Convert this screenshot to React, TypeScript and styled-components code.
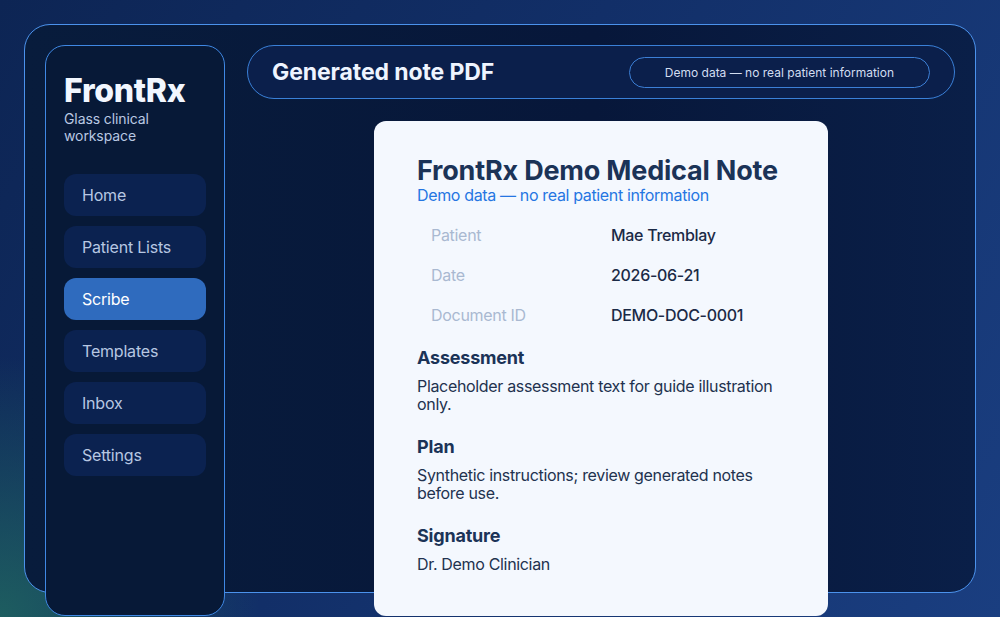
import React from "react";
import styled, { createGlobalStyle } from "styled-components";

const GlobalStyle = createGlobalStyle`
  html, body {
    margin: 0;
    padding: 0;
    height: 100%;
    overflow: hidden;
  }
  body {
    font-family: Inter, "Noto Sans", "Liberation Sans", sans-serif;
    background:
      radial-gradient(circle at 0% 100%, rgba(34, 110, 96, 0.75) 0, rgba(34, 110, 96, 0) 260px),
      linear-gradient(120deg, #0d2554 0%, #122f68 45%, #1a3e80 100%);
    min-height: 617px;
  }
`;

const Page = styled.div`
  padding: 24px;
  height: 617px;
  box-sizing: border-box;
`;

const Frame = styled.div`
  height: 569px;
  box-sizing: border-box;
  border: 1px solid #4b92ec;
  border-radius: 26px;
  background: linear-gradient(90deg, #081c3c 0%, #07173a 60%, #0a1f48 100%);
  padding: 20px;
  display: grid;
  grid-template-columns: 180px 1fr;
  gap: 22px;
  align-items: stretch;
`;

const Sidebar = styled.aside`
  box-sizing: border-box;
  height: 571px;
  border: 1px solid #3f88e4;
  border-radius: 20px;
  background: #071937;
  padding: 26px 18px 18px;
  display: flex;
  flex-direction: column;
`;

const Logo = styled.div`
  font-size: 32px;
  font-weight: 800;
  color: #f2f7ff;
  line-height: 38px;
  letter-spacing: -0.3px;
`;

const Tagline = styled.div`
  font-size: 14px;
  line-height: 17px;
  color: #b9c8e2;
  width: 110px;
  letter-spacing: -0.1px;
`;

const Nav = styled.nav`
  margin-top: 30px;
  display: flex;
  flex-direction: column;
  gap: 10px;
`;

const NavItem = styled.div<{ active?: boolean }>`
  height: 42px;
  border-radius: 12px;
  padding-left: 18px;
  display: flex;
  align-items: center;
  font-size: 16px;
  letter-spacing: -0.2px;
  color: ${({ active }) => (active ? "#ffffff" : "#b7c7e2")};
  background: ${({ active }) => (active ? "#2f6bbe" : "#0b2250")};
`;

const Main = styled.main`
  display: flex;
  flex-direction: column;
  gap: 22px;
  min-width: 0;
`;

const Header = styled.header`
  height: 54px;
  box-sizing: border-box;
  border: 1px solid #3a80d8;
  border-radius: 27px;
  background: #0b1f4b;
  padding: 0 24px;
  display: flex;
  align-items: center;
  justify-content: space-between;
`;

const HeaderTitle = styled.h1`
  margin: 0;
  font-size: 23px;
  font-weight: 700;
  color: #eef4ff;
  letter-spacing: -0.1px;
`;

const Badge = styled.div`
  height: 31px;
  box-sizing: border-box;
  border: 1px solid #3c7fd6;
  border-radius: 16px;
  padding: 0 35px;
  display: flex;
  align-items: center;
  font-size: 12px;
  color: #d2ddf1;
`;

const Card = styled.article`
  align-self: center;
  width: 454px;
  box-sizing: border-box;
  background: #f4f8fe;
  border-radius: 12px;
  padding: 34px 43px 43px;
  color: #1b2c4a;
`;

const CardTitle = styled.h2`
  margin: 0;
  font-size: 27px;
  line-height: 32px;
  font-weight: 700;
  color: #1b3357;
  letter-spacing: -0.2px;
`;

const Subtitle = styled.div`
  margin-top: -2px;
  font-size: 16px;
  line-height: 20px;
  color: #2576e2;
  letter-spacing: -0.35px;
`;

const MetaTable = styled.table`
  border-collapse: collapse;
  margin-top: 10px;
  font-size: 16px;
  letter-spacing: -0.3px;
`;

const MetaLabel = styled.td`
  width: 152px;
  padding: 10px 14px;
  color: #a9b9d1;
  line-height: 20px;
`;

const MetaValue = styled.td`
  padding: 10px 14px;
  color: #1b2a46;
  font-weight: 500;
  line-height: 20px;
`;

const Section = styled.section`
  margin-top: 12px;
  & + & {
    margin-top: 23px;
  }
`;

const SectionTitle = styled.h3`
  margin: 0;
  font-size: 18px;
  line-height: 22px;
  font-weight: 700;
  color: #1b3357;
  letter-spacing: -0.2px;
`;

const SectionText = styled.p`
  margin: 8px 0 0;
  font-size: 16px;
  line-height: 18px;
  color: #22324f;
  letter-spacing: -0.33px;
`;

const navItems = ["Home", "Patient Lists", "Scribe", "Templates", "Inbox", "Settings"];

const meta = [
  ["Patient", "Mae Tremblay"],
  ["Date", "2026-06-21"],
  ["Document ID", "DEMO-DOC-0001"],
];

const sections = [
  ["Assessment", "Placeholder assessment text for guide illustration only."],
  ["Plan", "Synthetic instructions; review generated notes before use."],
  ["Signature", "Dr. Demo Clinician"],
];

export default function App() {
  return (
    <>
      <GlobalStyle />
      <Page>
        <Frame>
          <Sidebar>
            <Logo>FrontRx</Logo>
            <Tagline>Glass clinical workspace</Tagline>
            <Nav>
              {navItems.map((item) => (
                <NavItem key={item} active={item === "Scribe"}>
                  {item}
                </NavItem>
              ))}
            </Nav>
          </Sidebar>
          <Main>
            <Header>
              <HeaderTitle>Generated note PDF</HeaderTitle>
              <Badge>Demo data — no real patient information</Badge>
            </Header>
            <Card>
              <CardTitle>FrontRx Demo Medical Note</CardTitle>
              <Subtitle>Demo data — no real patient information</Subtitle>
              <MetaTable>
                <tbody>
                  {meta.map(([label, value]) => (
                    <tr key={label}>
                      <MetaLabel>{label}</MetaLabel>
                      <MetaValue>{value}</MetaValue>
                    </tr>
                  ))}
                </tbody>
              </MetaTable>
              {sections.map(([title, text]) => (
                <Section key={title}>
                  <SectionTitle>{title}</SectionTitle>
                  <SectionText>{text}</SectionText>
                </Section>
              ))}
            </Card>
          </Main>
        </Frame>
      </Page>
    </>
  );
}
